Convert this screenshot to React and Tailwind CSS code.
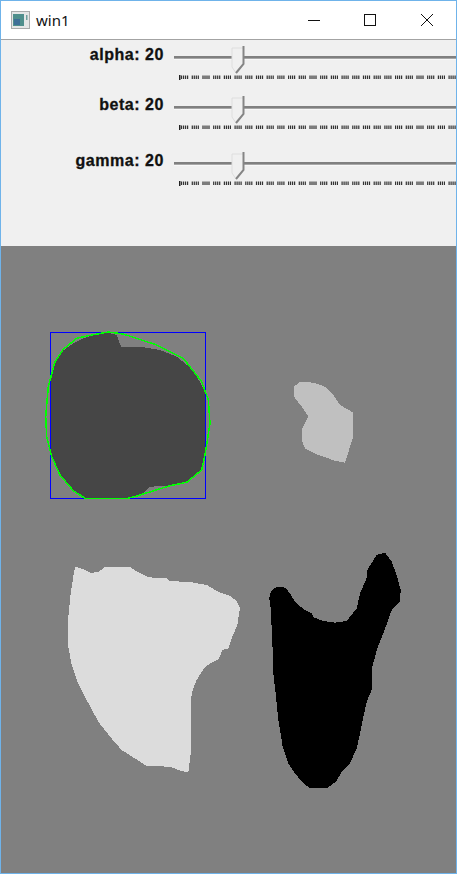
const white = [[75,80],[100,88],[120,98],[145,97],[165,80],[240,80],[255,92],[295,112],[350,115],[358,124],[415,125],[470,135],[510,158],[535,165],[560,182],[570,205],[562,255],[545,295],[535,325],[518,330],[505,358],[480,370],[462,385],[440,420],[428,450],[423,475],[422,640],[415,697],[390,692],[360,680],[290,678],[270,665],[215,630],[180,590],[145,545],[110,480],[80,420],[65,375],[55,320],[55,230],[62,160],[70,110]];
const black = [[62,140],[75,143],[90,160],[105,185],[130,207],[155,220],[160,232],[190,243],[225,248],[260,243],[290,205],[300,160],[322,110],[322,90],[350,45],[375,38],[395,65],[410,105],[422,150],[420,185],[395,210],[385,240],[370,280],[352,325],[337,380],[335,450],[322,480],[310,530],[300,580],[290,625],[270,670],[245,695],[228,725],[200,745],[150,745],[125,725],[105,700],[85,670],[68,620],[55,540],[48,470],[40,400],[37,300],[32,205],[28,175],[32,155],[45,143]];
const light = [[60,35],[100,38],[135,50],[160,75],[180,105],[220,128],[218,205],[195,278],[165,272],[115,255],[75,235],[67,215],[67,175],[85,140],[65,110],[42,80],[42,50]];
const dark = [[160,55],[190,45],[235,38],[260,45],[273,80],[340,82],[390,90],[440,110],[490,150],[520,205],[528,230],[528,400],[515,450],[470,485],[420,497],[360,500],[340,520],[295,535],[165,535],[130,512],[90,465],[65,415],[60,380],[60,190],[75,130],[95,95],[130,70]];
const hull = [[235,36],[280,42],[380,75],[460,115],[515,185],[535,240],[540,310],[525,405],[515,450],[470,487],[420,497],[320,528],[295,535],[165,535],[130,512],[90,465],[65,410],[50,350],[47,290],[55,200],[75,125],[100,88],[140,55],[190,44]];

// points were read off 3x crops, so scale back and add the crop origin
const pts = (list, ox, oy) =>
  list.map(([x, y]) => `${(ox + x / 3).toFixed(1)},${(oy + y / 3).toFixed(1)}`).join(" ");

const sliders = [
  { label: "alpha: 20", spacing: "mb-[10px]" },
  { label: "beta: 20", spacing: "mb-[16px]" },
  { label: "gamma: 20", spacing: "" },
];

// ticks come in little groups of four
const ticks = Array.from({ length: 104 }, (_, i) => 2 + Math.floor(i / 4) * 10.7 + (i % 4) * 2);

const Slider = ({ label, spacing }) => (
  <div className={`flex h-[40px] ${spacing}`}>
    <div className="w-[163px] pt-[5px] text-right text-[16px] leading-[20px] font-bold tracking-[0.55px] text-[#111] [-webkit-text-stroke:0.3px_#111] font-['Liberation_Sans',sans-serif]">
      {label}
    </div>
    <div className="relative ml-[10px] flex-1 overflow-hidden">
      <div className="mt-[16px] h-[4px] border-t-2 border-b border-t-[#808080] border-b-[#f8f8f8] bg-[#a8a8a8]" />
      <svg className="absolute left-[57px] top-[6px]" width="14" height="28" viewBox="0 0 14 28">
        <path d="M1 2H12.5V18L5 27L1 21Z" fill="#f0f0f0" stroke="#dedede" />
        <path d="M12.5 0V18L5 27" fill="none" stroke="#858585" strokeWidth="2" />
      </svg>
      <svg className="absolute left-[5px] top-[35px]" width="283" height="5" viewBox="0 0 283 5">
        <rect x="0" y="0" width="1.5" height="5" fill="#222" />
        {ticks.map((x) => (
          <rect key={x} x={x} y="0.5" width="1.2" height="3.5" fill="#333" />
        ))}
      </svg>
    </div>
  </div>
);

const App = () => {
  return (
    <div className="flex h-[874px] w-[457px] flex-col overflow-hidden border border-[#6fb3ea] bg-[#808080]">
      <div className="flex h-[39px] shrink-0 items-center border-b border-[#a3a3a3] bg-white">
        <svg className="ml-[10px]" width="19" height="18" viewBox="0 0 19 18">
          <rect x="0.5" y="0.5" width="18" height="17" fill="#e4e6e6" stroke="#a9abab" />
          <rect x="2" y="3" width="11" height="12" fill="#4f8f8c" />
          <rect x="3" y="8" width="6" height="6" fill="#3e6f97" />
          <rect x="15" y="4" width="1.5" height="5" fill="#6f9f9c" />
        </svg>
        <span className="ml-[6px] text-[15px] text-[#111] font-['Noto_Sans',sans-serif]">win1</span>
        <svg className="ml-auto mr-[22px]" width="126" height="13" viewBox="0 0 126 13" fill="none" stroke="#111">
          <path d="M0 6.5H12" />
          <rect x="56.5" y="0.5" width="11" height="11" />
          <path d="M113 0L125 12M125 0L113 12" />
        </svg>
      </div>

      <div className="h-[206px] shrink-0 bg-[#f0f0f0]">
        {sliders.map((s) => (
          <Slider key={s.label} {...s} />
        ))}
      </div>

      <svg className="block flex-1" viewBox="1 246 455 627" width="455" height="627">
        <rect x="1" y="246" width="455" height="627" fill="#808080" />
        <g shapeRendering="crispEdges">
          <polygon points={pts(dark, 30, 320)} fill="#464646" />
          <rect x="50.5" y="332.5" width="155" height="166" fill="none" stroke="#0000ff" />
          <polygon points={pts(hull, 30, 320)} fill="none" stroke="#00ff00" strokeWidth="1.5" />
          <polygon points={pts(light, 280, 370)} fill="#c0c0c0" />
          <polygon points={pts(white, 50, 540)} fill="#dcdcdc" />
          <polygon points={pts(black, 260, 540)} fill="#000" />
        </g>
      </svg>
    </div>
  );
};

export default App;
